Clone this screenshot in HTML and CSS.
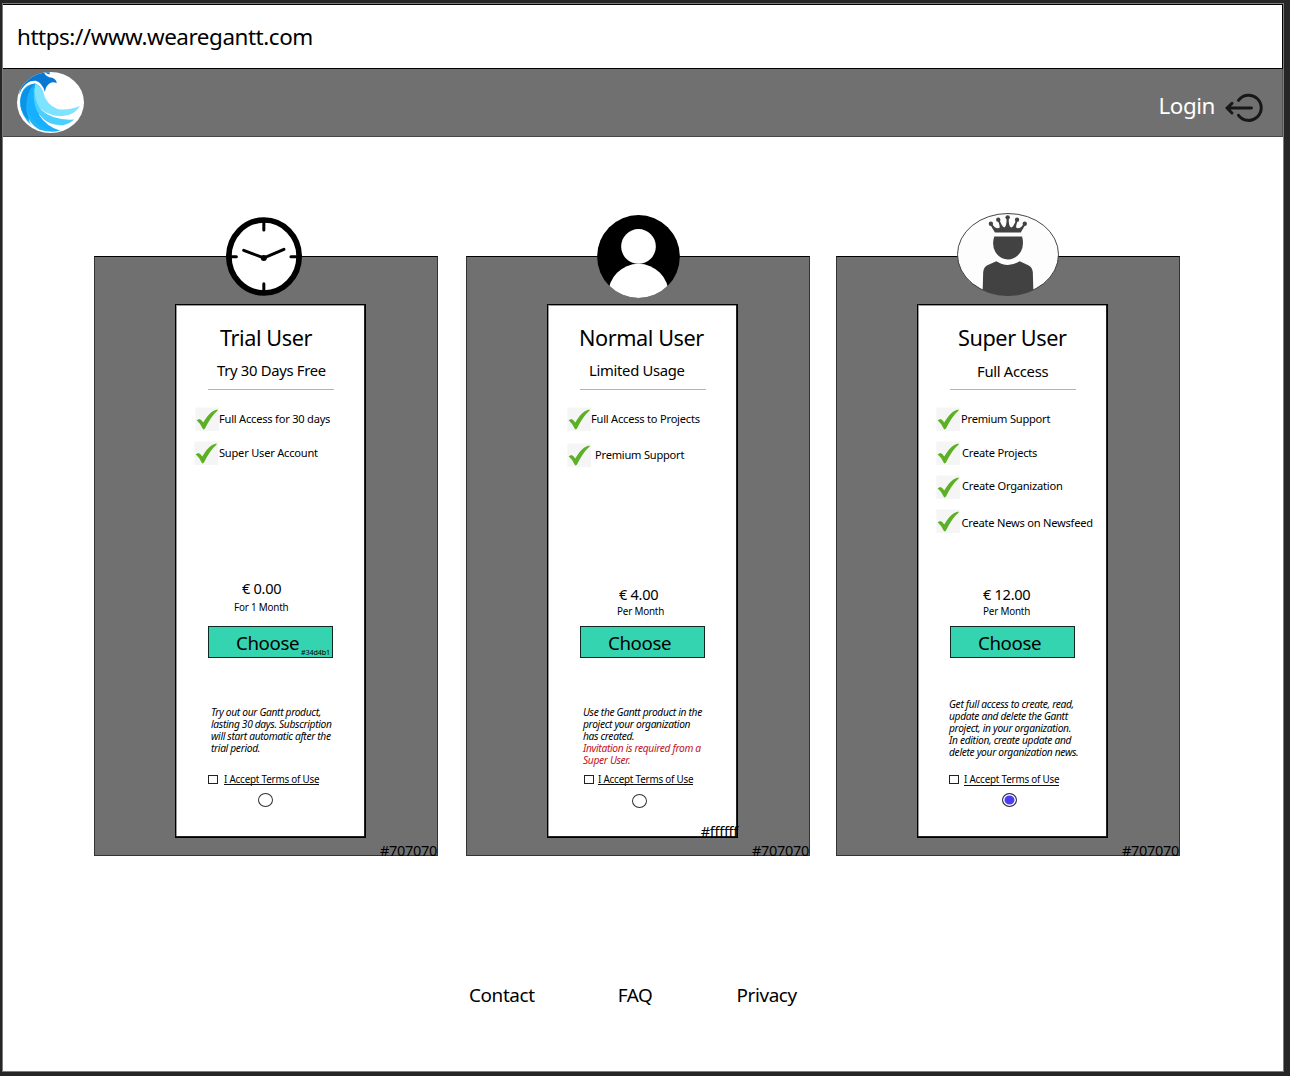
FILE: index.html
```html
<!DOCTYPE html>
<html lang="en">
<head>
<meta charset="utf-8">
<title>Gantt plans</title>
<link rel="stylesheet" href="styles.css">
</head>
<body>
<svg class="defs" width="0" height="0" aria-hidden="true">
  <symbol id="check" viewBox="76 321 73 72">
    <rect x="77" y="322" width="72" height="71" fill="#f5f5f6"/>
    <path d="M81 361 L89 357 Q95 358 101 368 Q116 342 129 334 Q137 329 144 328 L145 331 Q124 349 106 387 L101 389 Q92 370 81 361Z" fill="#5cb025"/>
  </symbol>
</svg>
<div class="window">
  <div class="urlbar"><span class="t url">https://www.wearegantt.com</span></div>
  <header class="navbar">
    <svg class="logo" viewBox="50 215 202 186" preserveAspectRatio="none">
      <defs><clipPath id="disc"><ellipse cx="151" cy="308" rx="101" ry="93"/></clipPath></defs>
      <ellipse cx="151" cy="308" rx="101" ry="93" fill="#fff"/>
      <g clip-path="url(#disc)">
        <path d="M56 284 Q64 232 112 218 L133 216 Q131 224 147 231 Q168 232 170 249 Q158 243 149 249 Q137 256 134 276 Q126 247 106 242 Q74 240 56 284Z" fill="#0878d5"/>
        <path d="M132 214 L149 216 L148 223 L139 219Z" fill="#0878d5"/>
        <path d="M60 296 Q66 253 105 250 Q121 256 128 275 Q132 300 116 345 Q133 385 180 394 Q151 402 118 391 Q95 379 85 357 Q87 371 96 380 Q56 347 60 296Z" fill="#22b5f6"/>
        <path d="M60 300 Q66 257 105 250 Q76 276 78 330 L86 362 Q56 335 60 300Z" fill="#0b94e7"/>
        <path d="M79 329 Q76 276 104 252 Q98 300 116 345 Q138 380 180 394 Q110 397 79 329Z" fill="#17afff"/>
        <path d="M100 268 Q98 322 119 347 Q144 380 190 377 Q212 372 222 360 Q160 364 122 330 Q104 305 104 262Z" fill="#4acfff"/>
        <path d="M105 251 Q119 256 129 277 Q139 316 172 328 Q207 334 240 318 Q224 348 184 350 Q144 348 119 326 Q98 295 105 251Z" fill="#7ee3ff"/>
      </g>
    </svg>
    <a class="login"><span class="t">Login</span>
      <svg class="login-icon" viewBox="284 114 118 90" fill="none" stroke="#171717" stroke-width="9" stroke-linecap="round" stroke-linejoin="round">
        <path d="M325 136 A38 38 0 1 1 325 181 M364 159 H290 M305 145 L290 159 L305 174"/>
      </svg>
    </a>
  </header>
  <main class="plans">
    <section class="plan trial">
      <svg class="badge" viewBox="49 36 227 237" preserveAspectRatio="none">
        <ellipse cx="162.500" cy="154.500" rx="105" ry="109.500" fill="#fff" stroke="#000" stroke-width="17"/>
        <path d="M162 51 V75 M162 236 V258 M64 155 H80 M243 155 H262 M102 136 L162 159 L222 133" fill="none" stroke="#000" stroke-width="9" stroke-linecap="round"/>
        <circle cx="162" cy="159" r="9"/>
      </svg>
      <div class="panel">
        <div class="head"><h2 class="t">Trial User</h2><p class="t sub">Try 30 Days Free</p></div>
        <ul class="features">
          <li><svg><use href="#check"/></svg><span class="t">Full Access for 30 days</span></li>
          <li><svg><use href="#check"/></svg><span class="t">Super User Account</span></li>
        </ul>
        <div class="price"><span class="t amount">€ 0.00</span><span class="t per">For 1 Month</span></div>
        <button class="choose"><span class="t">Choose</span><small class="t hex">#34d4b1</small></button>
        <p class="desc">Try out our Gantt product,<br>lasting 30 days. Subscription<br>will start automatic after the<br>trial period.</p>
        <label class="terms"><i class="box"></i><span class="t">I Accept Terms of Use</span></label>
        <i class="radio"></i>
      </div>
      <span class="t tag">#707070</span>
    </section>
    <section class="plan normal">
      <svg class="badge" viewBox="51 30 249 248" preserveAspectRatio="none">
        <defs><clipPath id="round"><circle cx="175.500" cy="154" r="124"/></clipPath></defs>
        <circle cx="175.500" cy="154" r="124"/>
        <g clip-path="url(#round)" fill="#fff"><circle cx="175.500" cy="124" r="52"/><circle cx="175.500" cy="267" r="91"/></g>
      </svg>
      <div class="panel">
        <div class="head"><h2 class="t">Normal User</h2><p class="t sub">Limited Usage</p></div>
        <ul class="features">
          <li><svg><use href="#check"/></svg><span class="t">Full Access to Projects</span></li>
          <li><svg><use href="#check"/></svg><span class="t">Premium Support</span></li>
        </ul>
        <div class="price"><span class="t amount">€ 4.00</span><span class="t per">Per Month</span></div>
        <button class="choose"><span class="t">Choose</span></button>
        <p class="desc">Use the Gantt product in the<br>project your organization<br>has created.<br><em>Invitation is required from a<br>Super User.</em></p>
        <label class="terms"><i class="box"></i><span class="t">I Accept Terms of Use</span></label>
        <i class="radio"></i>
        <span class="t tag">#ffffff</span>
      </div>
      <span class="t tag">#707070</span>
    </section>
    <section class="plan super">
      <svg class="badge" viewBox="37 24 304 248" preserveAspectRatio="none">
        <defs><clipPath id="oval"><ellipse cx="189" cy="148" rx="151" ry="123"/></clipPath></defs>
        <ellipse cx="189" cy="148" rx="150.500" ry="122.500" fill="#fdfdfd" stroke="#222" stroke-width="2.500"/>
        <g fill="#424242" clip-path="url(#oval)">
          <path d="M148 94 H231 Q238 120 227 140 Q213 162 189 163 Q164 162 151 140 Q140 119 148 94Z"/>
          <path d="M154 168 Q188 190 224 168 L251 181 Q262 187 263 202 L265 272 H113 L115 202 Q116 187 126 181Z"/>
          <path d="M150 82 L136 58 L141 55 Q151 72 163 69 Q167 65 158 46 L164 45 Q171 66 178 67 Q185 64 185 38 H191 Q191 64 198 67 Q205 67 213 45 L219 46 Q210 65 215 69 Q226 72 236 55 L241 58 L227 82Z"/>
          <circle cx="138" cy="56" r="6.500"/><circle cx="160" cy="44" r="6.500"/><circle cx="188" cy="37" r="6.500"/><circle cx="216" cy="44" r="6.500"/><circle cx="239" cy="56" r="6.500"/>
        </g>
      </svg>
      <div class="panel">
        <div class="head"><h2 class="t">Super User</h2><p class="t sub">Full Access</p></div>
        <ul class="features">
          <li><svg><use href="#check"/></svg><span class="t">Premium Support</span></li>
          <li><svg><use href="#check"/></svg><span class="t">Create Projects</span></li>
          <li><svg><use href="#check"/></svg><span class="t">Create Organization</span></li>
          <li><svg><use href="#check"/></svg><span class="t">Create News on Newsfeed</span></li>
        </ul>
        <div class="price"><span class="t amount">€ 12.00</span><span class="t per">Per Month</span></div>
        <button class="choose"><span class="t">Choose</span></button>
        <p class="desc">Get full access to create, read,<br>update and delete the Gantt<br>project, in your organization.<br>In edition, create update and<br>delete your organization news.</p>
        <label class="terms"><i class="box"></i><span class="t">I Accept Terms of Use</span></label>
        <i class="radio on"></i>
      </div>
      <span class="t tag">#707070</span>
    </section>
  </main>
  <footer class="footer"><a class="t">Contact</a><a class="t">FAQ</a><a class="t">Privacy</a></footer>
</div>
</body>
</html>
```
FILE: styles.css
```css
* { box-sizing: border-box; margin: 0; padding: 0; }
body {
  height: 1076px;
  padding: 3px 6px 4px 2px;
  background: #262626;
  color: #000;
  font-family: "Noto Sans", "Open Sans", sans-serif;
  letter-spacing: -0.02em;
  overflow: hidden;
}
.defs { position: absolute; }
.t { display: block; white-space: nowrap; letter-spacing: -0.02em; }
.window { height: 1069px; border: 1px solid #7c7c7c; background: #fff; }

.urlbar {
  display: flex; align-items: center;
  height: 65px; padding: 0 0 1px 14px;
  border: 1px solid #000; border-left: 0;
}
.url { font-size: 22.450px; }

.navbar {
  display: flex; justify-content: space-between; align-items: flex-start;
  height: 68px; padding: 3px 18px 0 14px;
  background: #707070;
  border-bottom: 1px solid #484848; border-right: 1px solid #555;
}
.logo { width: 67px; height: 61px; }
.login { display: flex; color: #fff; font-size: 22.400px; line-height: 32px; padding-top: 18px; }
.login-icon { width: 39px; height: 30px; margin: 3px 0 0 10px; }

.plans { display: flex; padding: 119px 0 0 91px; }
.plan {
  position: relative;
  width: 344px; height: 600px; padding: 47px 0 0 80px;
  background: #707070;
  border: 1px solid #333; border-top-color: #000;
}
.normal { margin-left: 28px; }
.super { margin-left: 26px; }
.badge { position: absolute; }
.trial .badge { left: 131px; top: -40px; width: 76px; height: 79px; }
.normal .badge { left: 130px; top: -42px; width: 83px; height: 83px; }
.super .badge { left: 120px; top: -44px; width: 102px; height: 83px; }

.panel {
  position: relative;
  display: flex; flex-direction: column;
  width: 191px; height: 534px;
  background: #fff; border: 1px solid #000;
  box-shadow: inset -1px -1px 0 #222, inset 1px 1px 0 #999;
}
.tag { position: absolute; right: 0; bottom: -4px; font-size: 14.500px; line-height: 18px; }
.panel .tag { right: -1px; bottom: -3px; }

.head { height: 85px; padding-top: 19px; margin: 0 31px 0 32px; border-bottom: 1px solid #5cdcc0; }
.head h2 { font-size: 21.700px; font-weight: 400; line-height: 28px; margin-left: 12px; }
.head .sub { font-size: 14.800px; line-height: 20px; margin: 8px 0 0 9px; }
.normal .head h2 { margin-left: -1px; }
.super .head h2 { margin-left: 8px; }
.super .head .sub { margin: 9px 0 0 27px; }

.features { height: 184px; padding: 17px 0 0 19px; list-style: none; font-size: 11.100px; line-height: 24px; }
.features li { display: flex; height: 24px; margin-bottom: 10px; }
.features svg { flex: none; width: 24px; height: 24px; }
.trial li + li { margin-left: -1px; }
.trial li + li .t { margin-left: 1px; }
.normal li { margin-bottom: 12px; }
.normal li + li .t { margin-left: 4px; }
.super .features { padding-left: 18px; }
.super li .t { margin-left: 1px; }
.super li + li .t { margin-left: 2px; }
.super li:nth-child(3) .t { margin-top: -1px; }
.super li:nth-child(4) .t { margin: 2px 0 0 1.500px; }

.price { height: 52px; padding-top: 10px; }
.price .amount { font-size: 14.600px; line-height: 20px; margin-left: 71px; }
.price .per { font-size: 9.900px; line-height: 14px; margin-left: 69px; }
.trial .price { padding-top: 4px; }
.trial .amount { margin-left: 66px; }
.trial .per { margin: 2px 0 0 58px; }
.super .amount { margin-left: 65px; }
.super .per { margin-left: 65px; }

.choose {
  position: relative; flex: none;
  width: 125px; height: 32px; margin-left: 32px; padding-left: 27px;
  border: 1px solid #102820; background: #34d4b1; color: #000;
  font: 18.700px/31px "Noto Sans", sans-serif; text-align: left;
}
.hex { position: absolute; right: 2px; bottom: 0; font-size: 7.200px; line-height: 9px; }

.desc { height: 115px; padding: 48px 0 0 35px; font-size: 10.230px; line-height: 12px; font-style: italic; white-space: nowrap; }
.desc em { color: #c1121c; }
.super .desc { padding: 40px 0 0 31px; }

.terms { display: flex; height: 14px; margin-left: 32px; font-size: 9.850px; line-height: 13px; }
.box { width: 10px; height: 9px; margin: 2px 6px 0 0; border: 1px solid #222; }
.terms .t { height: 12px; border-bottom: 1px solid #111; }
.normal .terms { margin-left: 36px; }
.normal .box { margin-right: 4px; }
.super .terms { margin-left: 31px; }
.super .box { margin-right: 5px; }
.super .terms .t { height: 13px; line-height: 12px; }

.radio { flex: none; width: 15px; height: 14px; margin: 6px 0 0 82px; border: 1px solid #333; border-radius: 50%; }
.normal .radio { margin: 7px 0 0 84px; }
.super .radio { margin-left: 84px; }
.radio.on { background: #4a3df5; box-shadow: inset 0 0 0 1.500px #fff; }

.footer { display: flex; padding: 125px 0 0 466px; font-size: 18.900px; line-height: 28px; }
.footer a + a { margin-left: 83px; }
.footer a:last-child { margin-left: 84px; }
```
